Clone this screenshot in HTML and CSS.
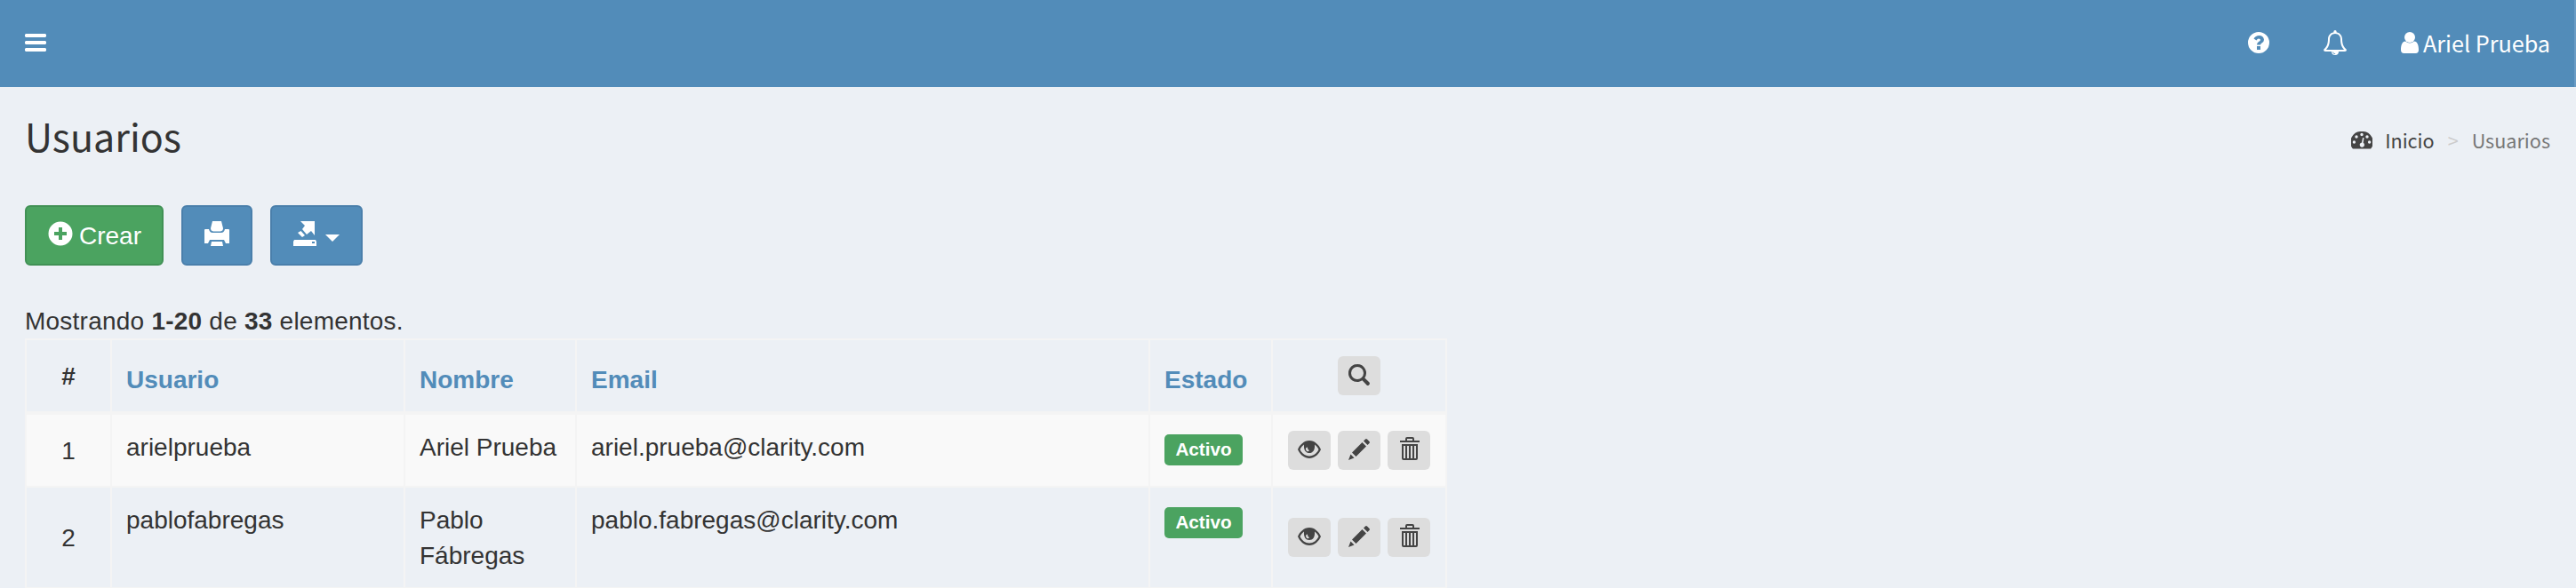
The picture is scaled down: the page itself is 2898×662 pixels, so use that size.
FILE: index.html
```html
<!doctype html>
<html lang="es">
  <head>
    <meta charset="utf-8" />
    <title>Usuarios</title>
    <link rel="stylesheet" href="styles.css">
  </head>
  <body>
	<!-- shared icons -->
	<svg class="sprite">
		<symbol id="eye" viewBox="0 0 26 20">
			<path fill-rule="evenodd" d="M13 0C19 0 24 5 26 10C24 15 19 20 13 20S2 15 0 10C2 5 7 0 13 0ZM7 4.500C5 6 3.500 8 2.500 10C4.500 14.500 8.500 17.500 13 17.500S21.500 14.500 23.500 10C22.500 8 21 6 19 4.500C19.500 11 17 14 13 14S6.500 11 7 4.500ZM9.500 8A2 2.500 0 1 0 13 11C11.500 10.500 11 9.500 11 7.500Z"/>
		</symbol>
		<symbol id="pencil" viewBox="0 0 24 24">
			<path d="M0 24L2.500 17.500L6.500 21.500ZM4 15.500L15.500 4L20 8.500L8.500 20ZM17 2.500L19 .5Q20 -.3 21 .5L23.500 3Q24.400 4 23.500 5L21.500 7Z"/>
		</symbol>
		<symbol id="trash" viewBox="0 0 22 26">
			<path fill-rule="evenodd" d="M0 4H6V2Q6 0 8 0H14Q16 0 16 2V4H22V6H0ZM8 4H14V2H8ZM2 8H20V24Q20 26 18 26H4Q2 26 2 24ZM4 10V24H6V10ZM8 10V24H10V10ZM12 10V24H14V10ZM16 10V24H18V10Z"/>
		</symbol>
	</svg>
	<header class="main-header">
		<a class="toggle" title="Menu">
			<svg width="24" height="20" viewBox="0 0 24 20"><path d="M1 0H23L24 1V3L23 4H1L0 3V1ZM1 8H23L24 9V11L23 12H1L0 11V9ZM1 16H23L24 17V19L23 20H1L0 19V17Z"/></svg>
		</a>
		<nav class="navbar">
			<svg class="help" width="24" height="24" viewBox="0 0 24 24"><path fill-rule="evenodd" d="M12 0A12 12 0 1 1 12 24A12 12 0 0 1 12 0ZM10 16V20H14V16ZM6.500 7.500L9.500 9.500Q10.500 7.500 12 7.500Q14 7.500 14 9Q14 10 12 11Q10 12.200 10 14.500H14Q14 13.500 15.500 12.600Q18 11 18 8.800Q17.500 4 12.500 4Q8.500 4 6.500 7.500Z"/></svg>
			<svg class="bell" width="26" height="28" viewBox="0 0 26 28"><path fill-rule="evenodd" d="M13 0C14.200 0 15 1 14.500 2.200C19 3 21 6.500 21 10C21 16 23 19 26 22Q26 24 24 24H17A4 4 0 0 1 9 24H2Q0 24 0 22C3 19 5 16 5 10C5 6.500 7 3 11.500 2.200C11 1 11.800 0 13 0ZM13 4C9 4 7 7 7 10C7 16 5.500 19 3 22H23C20.500 19 19 16 19 10C19 7 17 4 13 4ZM10.300 24.200Q10.500 27 13.200 27V26.500Q11 26.300 10.800 24.200Z"/></svg>
			<a class="user">
				<svg width="20" height="24" viewBox="0 0 20 24"><circle cx="10" cy="6" r="6"/><path d="M5 10.500Q10 14.500 15 10.500C18.500 10.500 20 15 20 20Q20 24 16.500 24H3.500Q0 24 0 20C0 15 1.500 10.500 5 10.500Z"/></svg>
				<span>Ariel Prueba</span>
			</a>
		</nav>
	</header>
	<section class="content-header">
		<h1>Usuarios</h1>
		<ol class="breadcrumb">
			<li><svg width="24" height="20" viewBox="0 0 24 20"><path fill-rule="evenodd" d="M12 0A12 12 0 0 1 22.500 19Q22 19.500 21 19.500H3Q2 19.500 1.500 19A12 12 0 0 1 12 0ZM12 1.800A1.700 1.700 0 1 0 12 5.200A1.700 1.700 0 0 0 12 1.800ZM6 4.300A1.700 1.700 0 1 0 6 7.700A1.700 1.700 0 0 0 6 4.300ZM18 4.300A1.700 1.700 0 1 0 18 7.700A1.700 1.700 0 0 0 18 4.300ZM3.400 10.300A1.700 1.700 0 1 0 3.400 13.700A1.700 1.700 0 0 0 3.400 10.300ZM20.600 10.300A1.700 1.700 0 1 0 20.600 13.700A1.700 1.700 0 0 0 20.600 10.300ZM13 7L12 12.500A2.600 2.600 0 1 0 13.600 12.800L14.500 7.300Z"/></svg>Inicio</li>
			<li class="sep">&gt;</li>
			<li class="active">Usuarios</li>
		</ol>
	</section>
	<section class="content">
		<div class="toolbar">
			<a class="btn btn-success">
				<svg width="28" height="28" viewBox="0 0 28 28"><path fill-rule="evenodd" d="M14 0.500A13.500 13.500 0 1 1 14 27.500A13.500 13.500 0 0 1 14 .5ZM12 7V12H7V16H12V21H16V16H21V12H16V7Z"/></svg>
				<span>Crear</span>
			</a>
			<a class="btn btn-primary" title="Imprimir">
				<svg width="28" height="28" viewBox="0 0 28 28"><path d="M9 0H19L21 8Q21 11 18 11.500H10Q7 11 7 8ZM0 10Q0 9 1 9H5Q6 13 9 13H19Q22 13 23 9H27Q28 9 28 10V25H24L22 21H6L4 25H0ZM8 23H20L21 28H7Z"/></svg>
			</a>
			<a class="btn btn-primary" title="Exportar">
				<svg width="26" height="28" viewBox="0 0 26 28"><path fill-rule="evenodd" d="M8 0H24V16L20 11L15 15L10 9L13 5ZM8.500 11L13 16L10 18L5 13ZM1 21H25L26 23V28H0V23ZM21 23V25H24V23Z"/></svg>
				<span class="caret"></span>
			</a>
		</div>
		<div class="summary">Mostrando <b>1-20</b> de <b>33</b> elementos.</div>
		<table class="grid">
			<colgroup><col class="c-num"><col class="c-user"><col class="c-name"><col class="c-email"><col class="c-state"><col class="c-actions"></colgroup>
			<thead>
				<tr>
					<th class="middle num">#</th>
					<th><a>Usuario</a></th>
					<th><a>Nombre</a></th>
					<th><a>Email</a></th>
					<th><a>Estado</a></th>
					<th class="middle">
						<div class="actions"><a class="act"><svg width="24" height="24" viewBox="0 0 24 24"><path fill-rule="evenodd" d="M10 0A10 10 0 0 1 18.300 15.500L23.500 20.500Q24.500 22 23 23.500Q21.500 24.500 20.500 23.500L15.500 18.300A10 10 0 1 1 10 0ZM10 3A7 7 0 1 0 10 17A7 7 0 0 0 10 3Z"/></svg></a></div>
					</th>
				</tr>
			</thead>
			<tbody>
				<tr>
					<td class="middle num">1</td>
					<td>arielprueba</td>
					<td>Ariel Prueba</td>
					<td>ariel.prueba@clarity.com</td>
					<td><span class="label">Activo</span></td>
					<td class="middle">
						<div class="actions">
							<a class="act" title="Ver"><svg width="26" height="20"><use href="#eye"/></svg></a>
							<a class="act" title="Editar"><svg width="24" height="24"><use href="#pencil"/></svg></a>
							<a class="act" title="Eliminar"><svg class="bin" width="22" height="26"><use href="#trash"/></svg></a>
						</div>
					</td>
				</tr>
				<tr>
					<td class="middle num">2</td>
					<td>pablofabregas</td>
					<td>Pablo Fábregas</td>
					<td>pablo.fabregas@clarity.com</td>
					<td><span class="label">Activo</span></td>
					<td class="middle">
						<div class="actions">
							<a class="act" title="Ver"><svg width="26" height="20"><use href="#eye"/></svg></a>
							<a class="act" title="Editar"><svg width="24" height="24"><use href="#pencil"/></svg></a>
							<a class="act" title="Eliminar"><svg class="bin" width="22" height="26"><use href="#trash"/></svg></a>
						</div>
					</td>
				</tr>
			</tbody>
		</table>
	</section>
  </body>
</html>
```

FILE: styles.css
```css
* {
	box-sizing: border-box;
}

body {
	margin: 0;
	height: 662px;
	overflow: hidden;
	background-color: #ecf0f5;
	color: #333;
	font-family: "Liberation Sans", Arial, sans-serif;
	font-size: 28px;
	line-height: 40px;
}

svg {
	display: block;
	flex: none;
	fill: currentColor;
}

.sprite {
	display: none;
}

.main-header {
	display: flex;
	align-items: center;
	justify-content: space-between;
	height: 98px;
	padding: 0 27px 2px 28px;
	background-color: #528cb9;
	border-right: 2px solid #6a9cc5;
	color: #fff;
}

.navbar {
	display: flex;
	align-items: center;
}

.bell {
	margin: 0 61px;
}

.user {
	display: flex;
	align-items: center;
	gap: 5px;
	font-family: "Noto Sans CJK JP", sans-serif;
	font-size: 25.2px;
}

.content-header {
	display: flex;
	justify-content: space-between;
	align-items: flex-start;
	height: 133px;
	padding: 27px 29px 0 28px;
	font-family: "Noto Sans CJK JP", sans-serif;
}

h1 {
	margin: 0;
	font-size: 43px;
	font-weight: 400;
	line-height: 54px;
}

.breadcrumb {
	display: flex;
	margin: 13px 0 0;
	padding: 0;
	list-style-type: none;
	font-size: 21.6px;
	line-height: 40px;
	color: #444;
}

.breadcrumb li {
	display: flex;
	align-items: center;
}

.breadcrumb svg {
	margin-right: 14px;
}

.breadcrumb .sep {
	padding: 0 15px;
	color: #ccc;
}

.breadcrumb .active {
	color: #777;
}

.content {
	padding-left: 28px;
}

.toolbar {
	display: flex;
	gap: 20px;
}

.btn {
	display: flex;
	height: 68px;
	padding: 16px 24px;
	border: 2px solid;
	border-radius: 6px;
	color: #fff;
}

.btn span {
	margin: -3px 0 0 7px;
}

.btn-success {
	width: 156px;
	background-color: #4ba360;
	border-color: #419155;
}

.btn-primary {
	background-color: #528cb9;
	border-color: #4a7fab;
}

.btn .caret {
	margin: 15px 0 0 10px;
	width: 16px;
	height: 8px;
	border: 8px solid transparent;
	border-top-color: #fff;
	border-bottom: 0;
}

.summary {
	margin-top: 42px;
	padding-top: 1px;
	height: 40px;
	letter-spacing: .23px;
}

.grid {
	table-layout: fixed;
	width: 1600px;
	border-collapse: separate;
	border-spacing: 0;
	border: 2px solid #f4f4f4;
	border-width: 2px 0 0 2px;
}

.c-num { width: 96px; }
.c-user { width: 330px; }
.c-name { width: 193px; }
.c-email { width: 645px; }
.c-state { width: 138px; }
.c-actions { width: 196px; }

th, td {
	padding: 17px 16px 15px;
	border: 2px solid #f4f4f4;
	border-width: 0 2px 2px 0;
	text-align: left;
	vertical-align: top;
}

th {
	height: 84px;
	border-bottom-width: 4px;
	vertical-align: bottom;
}

td {
	height: 82px;
}

th a {
	color: #528cb9;
}

tbody tr:nth-child(odd) {
	background-color: #f9f9f9;
}

.middle {
	padding-top: 0;
	padding-bottom: 0;
	text-align: center;
	vertical-align: middle;
}

.num {
	padding-top: 2px;
}

.actions {
	display: flex;
	justify-content: center;
	gap: 8px;
}

.act {
	display: flex;
	align-items: center;
	justify-content: center;
	width: 48px;
	height: 44px;
	padding-bottom: 2px;
	border-radius: 6px;
	background-color: #ddd;
	color: #444;
}

.bin {
	margin: 0 0 2px 2px;
}

.label {
	display: block;
	width: 88px;
	height: 35px;
	margin-top: 5px;
	border-radius: 5px;
	background-color: #4ba360;
	color: #fff;
	font-size: 20.7px;
	font-weight: bold;
	line-height: 33px;
	text-align: center;
}
```
